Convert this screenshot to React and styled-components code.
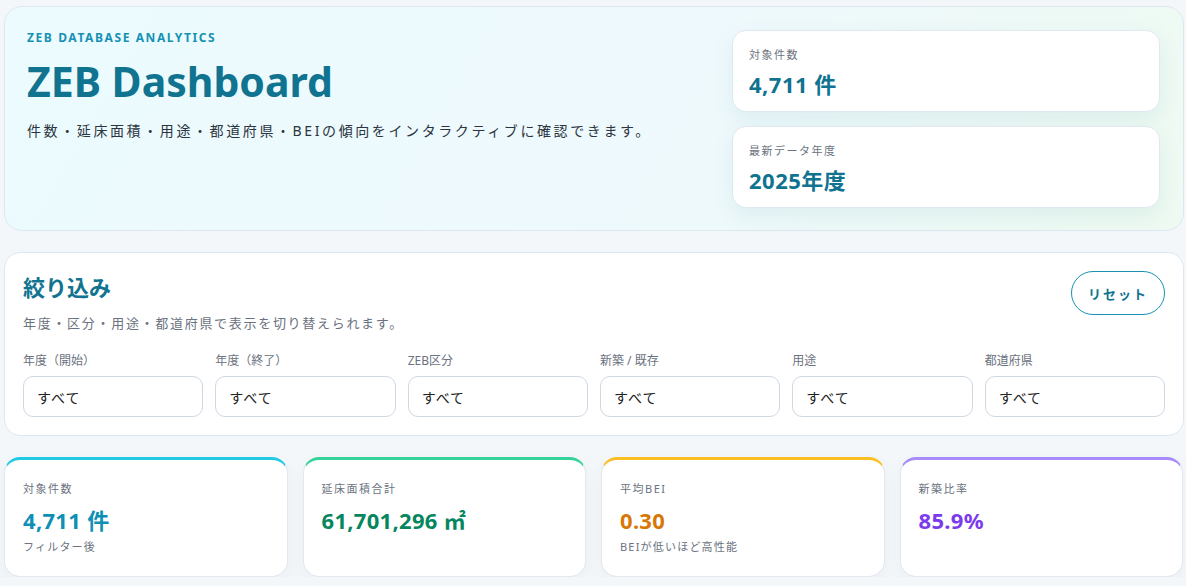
import styled, { createGlobalStyle } from 'styled-components';

const GlobalStyle = createGlobalStyle`
  * {
    box-sizing: border-box;
  }

  body {
    margin: 0;
    background: #f4f7fa;
    font-family: 'Noto Sans', 'Noto Sans CJK JP', sans-serif;
    color: #1f2937;
  }
`;

const StPage = styled.div`
  width: 1184px;
  padding: 6px 0 0 4px;
  display: flex;
  flex-direction: column;
  gap: 21px;
`;

const StHero = styled.section`
  display: grid;
  grid-template-columns: 1fr 428px;
  gap: 24px;
  padding: 23px 23px 22px 22px;
  border: 1px solid #dde7ef;
  border-radius: 18px;
  background: linear-gradient(120deg, #ebfbfe 0%, #eef9fd 55%, #eefaf1 100%);
`;

const StHeroText = styled.div``;

const StEyebrow = styled.p`
  margin: 0;
  font-size: 12px;
  line-height: 16px;
  font-weight: 700;
  letter-spacing: 1.6px;
  color: #1591b4;
`;

const StTitle = styled.h1`
  margin: 10px 0 0;
  font-size: 41px;
  line-height: 50px;
  font-weight: 700;
  color: #10738f;
`;

const StLead = styled.p`
  margin: 14px 0 0;
  font-size: 14px;
  letter-spacing: 2.6px;
  color: #2b3440;
`;

const StHeroStats = styled.div`
  display: flex;
  flex-direction: column;
  gap: 14px;
`;

const StHeroStat = styled.div`
  height: 82px;
  background: #fff;
  border: 1px solid #e1e9f0;
  border-radius: 14px;
  padding: 15px 16px 0;
  box-shadow: 0 8px 22px rgba(16, 115, 143, 0.08);
`;

const StSmallLabel = styled.p`
  margin: 0;
  font-size: 11px;
  line-height: 18px;
  letter-spacing: 1.5px;
  color: #6b7280;
`;

const StHeroValue = styled.p`
  margin: 5px 0 0;
  font-size: 22px;
  line-height: 30px;
  font-weight: 700;
  letter-spacing: 0.5px;
  color: #10738f;
`;

const StPanel = styled.section`
  background: #fff;
  border: 1px solid #dfe7ee;
  border-radius: 16px;
  padding: 18px;
`;

const StPanelHead = styled.div`
  display: flex;
  justify-content: space-between;
  align-items: flex-start;
`;

const StPanelTitle = styled.h2`
  margin: 2px 0 0;
  font-size: 22px;
  font-weight: 700;
  line-height: 28px;
  color: #10738f;
`;

const StPanelSub = styled.p`
  margin: 13px 0 0;
  font-size: 13px;
  line-height: 18px;
  letter-spacing: 1.7px;
  color: #6b7280;
`;

const StResetButton = styled.button`
  width: 94px;
  height: 44px;
  border: 1.5px solid #1a91b2;
  border-radius: 999px;
  background: #fff;
  font-family: inherit;
  font-size: 13px;
  font-weight: 700;
  letter-spacing: 2px;
  color: #10738f;
  cursor: pointer;
`;

const StFilterGrid = styled.div`
  display: grid;
  grid-template-columns: repeat(6, 1fr);
  gap: 12px;
  margin-top: 21px;
`;

const StField = styled.label`
  display: flex;
  flex-direction: column;
  gap: 7px;
`;

const StFieldLabel = styled.span`
  font-size: 12px;
  line-height: 16px;
  color: #6b7280;
`;

const StSelect = styled.div`
  height: 41px;
  display: flex;
  align-items: center;
  padding: 0 13px;
  border: 1px solid #cfd8e3;
  border-radius: 10px;
  background: #fff;
  font-size: 14px;
  letter-spacing: 1px;
  color: #222;
`;

const StKpiRow = styled.section`
  display: grid;
  grid-template-columns: repeat(4, 1fr);
  gap: 15px;
  padding-right: 1px;
`;

const StKpiCard = styled.div`
  height: 120px;
  background: #fff;
  border: 1px solid #e1e8ef;
  border-top: 3px solid ${({ $accent }) => $accent};
  border-radius: 16px;
  padding: 20px 18px 0;
  box-shadow: 0 6px 18px rgba(15, 23, 42, 0.04);
`;

const StKpiValue = styled.p`
  margin: 7px 0 0;
  font-size: 22px;
  line-height: 30px;
  font-weight: 700;
  letter-spacing: 0.3px;
  color: ${({ $color }) => $color};
`;

const StKpiNote = styled.p`
  margin: 3px 0 0;
  font-size: 11px;
  line-height: 18px;
  letter-spacing: 1.2px;
  color: #6b7280;
`;

const filters = ['年度（開始）', '年度（終了）', 'ZEB区分', '新築 / 既存', '用途', '都道府県'];

const kpis = [
  { label: '対象件数', value: '4,711 件', note: 'フィルター後', accent: '#22c9e3', color: '#0e8fb3' },
  { label: '延床面積合計', value: '61,701,296 ㎡', accent: '#34d399', color: '#05865e' },
  { label: '平均BEI', value: '0.30', note: 'BEIが低いほど高性能', accent: '#fbbf24', color: '#d97706' },
  { label: '新築比率', value: '85.9%', accent: '#a78bfa', color: '#7c3aed' },
];

export default function App() {
  return (
    <>
      <GlobalStyle />
      <StPage>
        <StHero>
          <StHeroText>
            <StEyebrow>ZEB DATABASE ANALYTICS</StEyebrow>
            <StTitle>ZEB Dashboard</StTitle>
            <StLead>件数・延床面積・用途・都道府県・BEIの傾向をインタラクティブに確認できます。</StLead>
          </StHeroText>
          <StHeroStats>
            <StHeroStat>
              <StSmallLabel>対象件数</StSmallLabel>
              <StHeroValue>4,711 件</StHeroValue>
            </StHeroStat>
            <StHeroStat>
              <StSmallLabel>最新データ年度</StSmallLabel>
              <StHeroValue>2025年度</StHeroValue>
            </StHeroStat>
          </StHeroStats>
        </StHero>

        <StPanel>
          <StPanelHead>
            <div>
              <StPanelTitle>絞り込み</StPanelTitle>
              <StPanelSub>年度・区分・用途・都道府県で表示を切り替えられます。</StPanelSub>
            </div>
            <StResetButton>リセット</StResetButton>
          </StPanelHead>
          <StFilterGrid>
            {filters.map((f) => (
              <StField key={f}>
                <StFieldLabel>{f}</StFieldLabel>
                <StSelect>すべて</StSelect>
              </StField>
            ))}
          </StFilterGrid>
        </StPanel>

        <StKpiRow>
          {kpis.map((k) => (
            <StKpiCard key={k.label} $accent={k.accent}>
              <StSmallLabel>{k.label}</StSmallLabel>
              <StKpiValue $color={k.color}>{k.value}</StKpiValue>
              {k.note && <StKpiNote>{k.note}</StKpiNote>}
            </StKpiCard>
          ))}
        </StKpiRow>
      </StPage>
    </>
  );
}
